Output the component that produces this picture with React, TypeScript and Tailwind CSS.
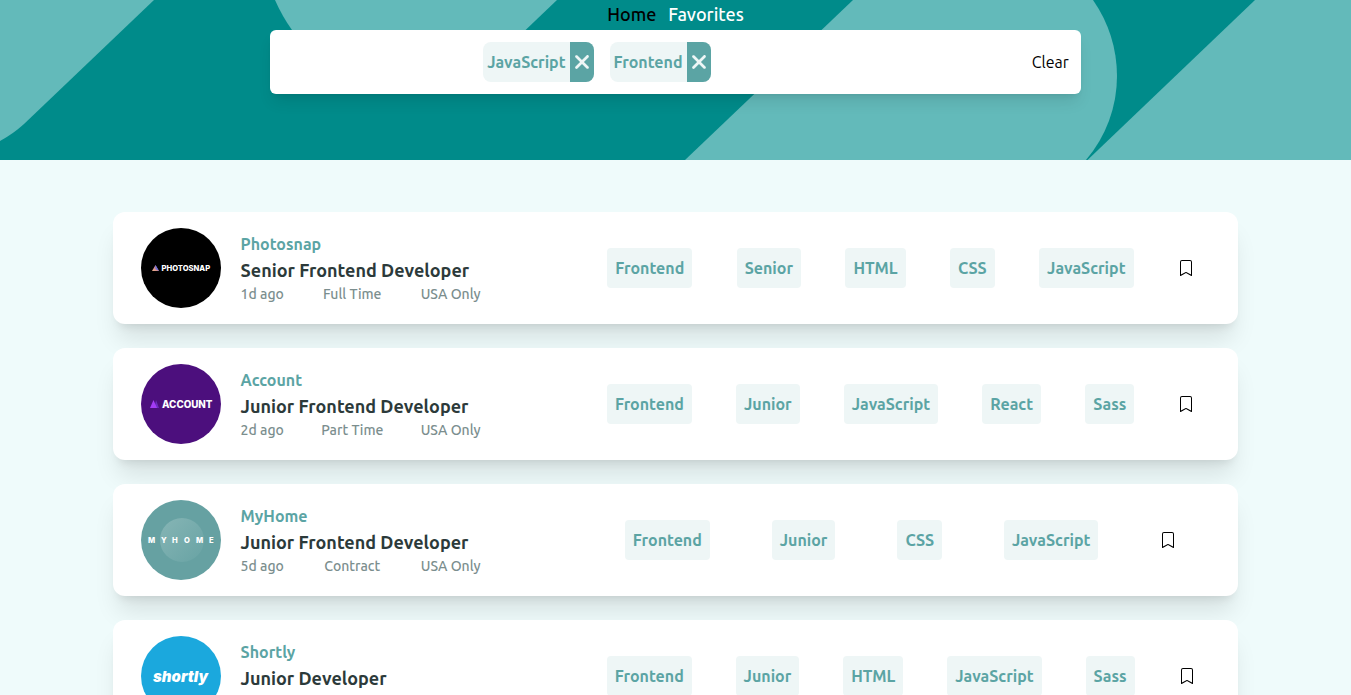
import { useState, type ReactNode } from "react";
import { FaXmark } from "react-icons/fa6";
import { BsBookmark, BsBookmarkFill } from "react-icons/bs";

type Job = {
  id: number;
  company: string;
  position: string;
  details: string[];
  tags: string[];
  logo: ReactNode;
};

const LOGO_FONT = "Inter, 'Liberation Sans', sans-serif";

const jobs: Job[] = [
  {
    id: 1,
    company: "Photosnap",
    position: "Senior Frontend Developer",
    details: ["1d ago", "Full Time", "USA Only"],
    tags: ["Frontend", "Senior", "HTML", "CSS", "JavaScript"],
    logo: (
      <>
        <defs>
          <linearGradient id="snap" x1="0" y1="1" x2="1" y2="0">
            <stop offset="0" stopColor="#f0b58a" />
            <stop offset="0.5" stopColor="#d08a90" />
            <stop offset="1" stopColor="#4d5fd0" />
          </linearGradient>
        </defs>
        <circle cx="40" cy="40" r="40" fill="#000" />
        <path d="M14.5 37 18 43H11Z" fill="url(#snap)" />
        <path d="M14.5 37 18 43 14.5 41Z" fill="#6b6fe0" />
        <text x="20.5" y="42.8" fontSize="7.6" fontWeight="800" fill="#fff" fontFamily={LOGO_FONT}>
          PHOTOSNAP
        </text>
      </>
    ),
  },
  {
    id: 2,
    company: "Account",
    position: "Junior Frontend Developer",
    details: ["2d ago", "Part Time", "USA Only"],
    tags: ["Frontend", "Junior", "JavaScript", "React", "Sass"],
    logo: (
      <>
        <circle cx="40" cy="40" r="40" fill="#4c0f7d" />
        <path d="M15 36 18 44H13.5Z" fill="#6d2bc0" />
        <path d="M12.5 36 16 44H9Z" fill="#a33bf5" />
        <text x="21" y="43.6" fontSize="9.8" fontWeight="800" fill="#fff" fontFamily={LOGO_FONT}>
          ACCOUNT
        </text>
      </>
    ),
  },
  {
    id: 3,
    company: "MyHome",
    position: "Junior Frontend Developer",
    details: ["5d ago", "Contract", "USA Only"],
    tags: ["Frontend", "Junior", "CSS", "JavaScript"],
    logo: (
      <>
        <defs>
          <linearGradient id="home" x1="0" y1="0" x2="1" y2="1">
            <stop offset="0" stopColor="#86b5b5" />
            <stop offset="1" stopColor="#68a3a4" />
          </linearGradient>
        </defs>
        <circle cx="40" cy="40" r="40" fill="#66a1a2" />
        <circle cx="41" cy="40" r="22" fill="url(#home)" />
        <text x="7 20 31 43 55 68" y="42.8" fontSize="7.6" fontWeight="800" fill="#fff" fontFamily={LOGO_FONT}>
          MYHOME
        </text>
      </>
    ),
  },
  {
    id: 4,
    company: "Shortly",
    position: "Junior Developer",
    details: [],
    tags: ["Frontend", "Junior", "HTML", "JavaScript", "Sass"],
    logo: (
      <>
        <circle cx="40" cy="40" r="40" fill="#1ba8dd" />
        <text x="12" y="46" fontSize="15" fontWeight="900" fontStyle="italic" fill="#fff" fontFamily={LOGO_FONT}>
          shortly
        </text>
      </>
    ),
  },
];

function HeaderPattern() {
  return (
    <svg
      className="absolute inset-0 h-full w-full"
      viewBox="0 0 1351 160"
      preserveAspectRatio="xMidYMid slice"
      fill="#63baba"
      aria-hidden="true"
    >
      <path d="M0 0H154L24 124Q13 134 0 141Z" />
      <path d="M275 0Q282 16 292 30Q330 80 400 90Q440 92 470 83L557 0Z" />
      <path d="M853 0H1093A135 135 0 0 1 1117 76A129 129 0 0 1 1086 160H685Z" />
      <path d="M1255 0H1351V160H1087.5Z" />
    </svg>
  );
}

function FilterChip({ label, onRemove }: { label: string; onRemove: () => void }) {
  return (
    <div className="mx-2 flex h-10 overflow-hidden rounded-lg bg-[#eef6f6]">
      <span className="px-1 font-bold leading-10 text-[#5ba4a4]">{label}</span>
      <button
        type="button"
        aria-label={`Remove ${label}`}
        onClick={onRemove}
        className="flex w-6 items-center justify-center bg-[#5ba4a4] text-[#eef6f6]"
      >
        <FaXmark size={22} />
      </button>
    </div>
  );
}

function JobCard({ job, onTag }: { job: Job; onTag: (tag: string) => void }) {
  const [saved, setSaved] = useState(false);

  return (
    <article className="flex w-10/12 items-center rounded-xl bg-white py-4 shadow-xl">
      <div className="flex w-2/5 items-center gap-5 pl-7">
        <svg className="size-20 shrink-0" viewBox="0 0 80 80" role="img" aria-label={job.company}>
          {job.logo}
        </svg>
        <div className="w-60 shrink-0">
          <p className="font-bold text-[#5ba4a4]">{job.company}</p>
          <h2 className="whitespace-nowrap text-lg font-bold leading-7 text-[#2c3a3a]">{job.position}</h2>
          <div className="flex h-5 justify-between text-sm font-medium text-[#7b8e8e]">
            {job.details.map((d) => (
              <span key={d}>{d}</span>
            ))}
          </div>
        </div>
      </div>
      <div className="flex w-3/5 items-center justify-evenly">
        {job.tags.map((tag) => (
          <button
            key={tag}
            type="button"
            onClick={() => onTag(tag)}
            className="h-10 rounded bg-[#eef6f6] px-2 font-bold text-[#5ba4a4]"
          >
            {tag}
          </button>
        ))}
        <button type="button" aria-label={`Save ${job.company}`} onClick={() => setSaved(!saved)}>
          {saved ? <BsBookmarkFill /> : <BsBookmark />}
        </button>
      </div>
    </article>
  );
}

export default function App() {
  const [filters, setFilters] = useState(["JavaScript", "Frontend"]);

  const addFilter = (tag: string) => {
    if (!filters.includes(tag)) setFilters([...filters, tag]);
  };

  // a job stays visible only when it carries every chosen tag
  const visible = jobs.filter((job) => filters.every((f) => job.tags.includes(f)));

  return (
    <div className="min-h-screen bg-[#effbfb] pb-6 font-['Ubuntu','Open_Sans',sans-serif] text-black">
      <header className="relative h-40 bg-[#008b8a]">
        <HeaderPattern />
        <div className="relative flex flex-col items-center">
          <nav className="flex gap-3 pb-0.5 text-lg font-medium leading-7">
            <a href="#home">Home</a>
            <a href="#favorites" className="text-white">
              Favorites
            </a>
          </nav>
          <div className="flex min-h-16 w-3/5 items-center justify-between rounded-md bg-white p-3 shadow-lg">
            <div className="flex w-4/5 justify-center">
              {filters.map((f) => (
                <FilterChip key={f} label={f} onRemove={() => setFilters(filters.filter((x) => x !== f))} />
              ))}
            </div>
            <button type="button" onClick={() => setFilters([])}>
              Clear
            </button>
          </div>
        </div>
      </header>
      <main className="flex flex-col items-center gap-6 pt-13">
        {visible.map((job) => (
          <JobCard key={job.id} job={job} onTag={addFilter} />
        ))}
      </main>
    </div>
  );
}
